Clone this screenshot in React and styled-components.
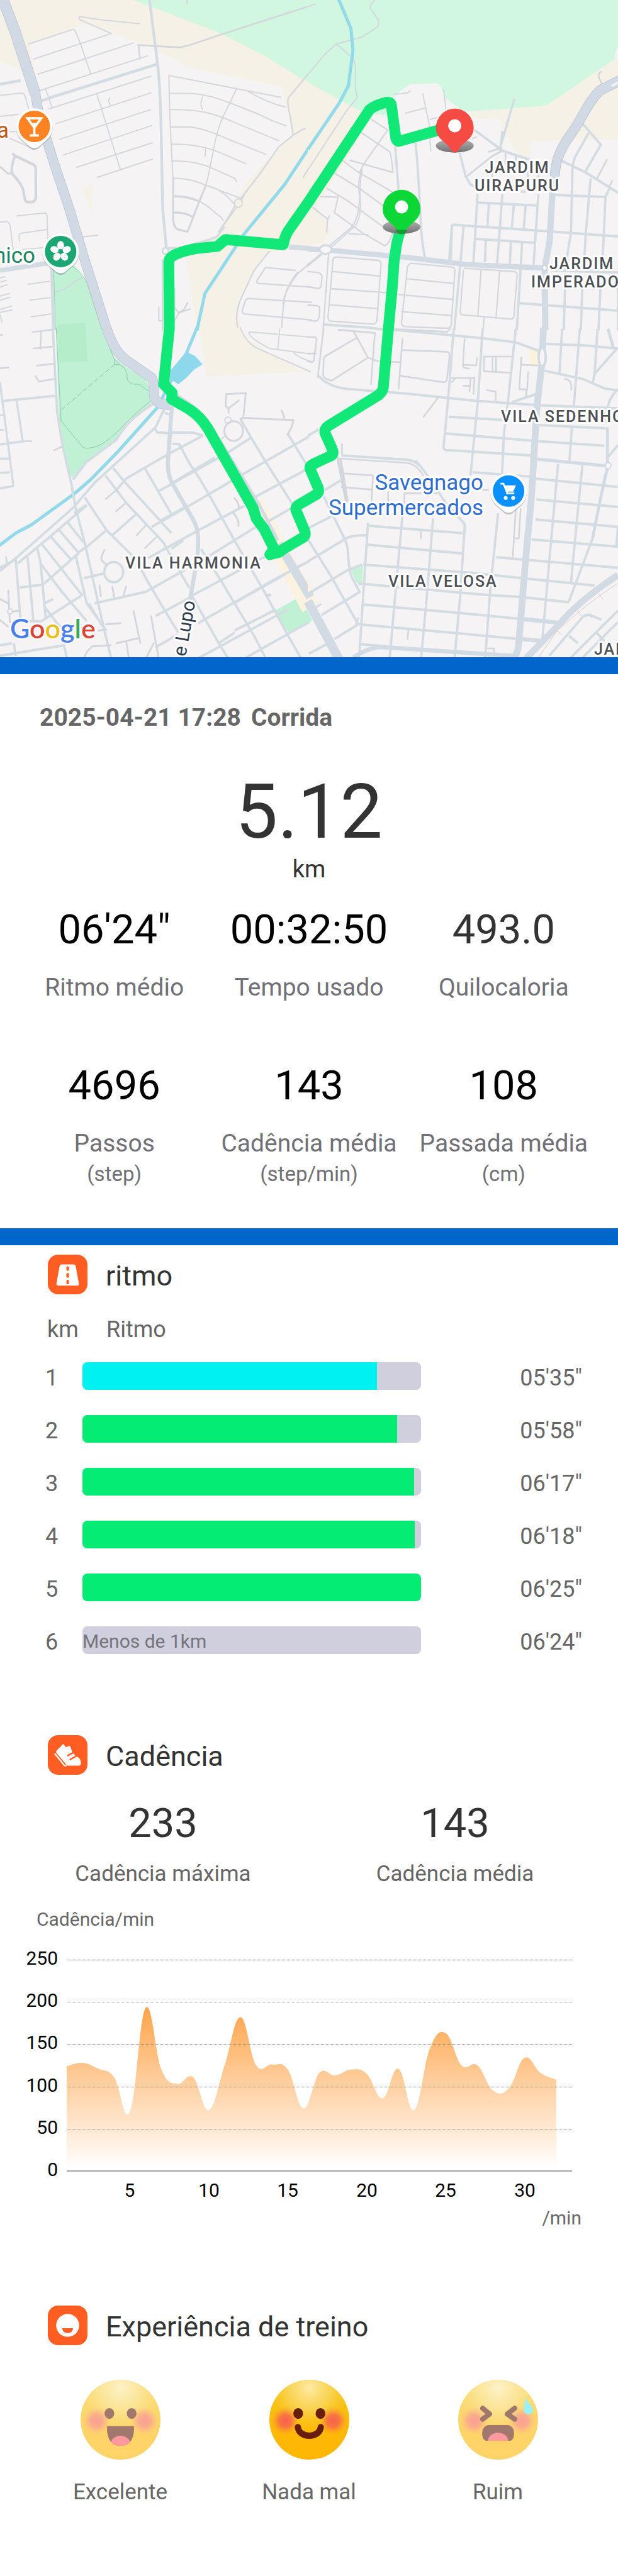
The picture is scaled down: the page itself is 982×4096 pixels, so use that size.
import React, { useState } from "react";
import styled, { createGlobalStyle } from "styled-components";

const GlobalStyle = createGlobalStyle`
  * { box-sizing: border-box; }
  body { margin: 0; background: #fff; font-family: Roboto, "Noto Sans", sans-serif; color: #333; }
`;

const Page = styled.main`
  width: 100%;
`;

const Divider = styled.hr`
  margin: 0;
  border: 0;
  height: 27px;
  background: #0066cc;
`;

const MapFigure = styled.figure`
  margin: 0;
  overflow: hidden;
  svg { display: block; width: 100%; height: auto; }
`;

const Summary = styled.section`
  padding: 45px 27px 66px;
`;

const RunTitle = styled.h1`
  margin: 0 36px;
  font-size: 39px;
  line-height: 48px;
  font-weight: 700;
  color: #666;
  span { margin-left: 16px; }
`;

const Distance = styled.div`
  margin-top: 66px;
  font-size: 120px;
  line-height: 120px;
  text-align: center;
`;

const DistanceUnit = styled.div`
  margin-top: 7px;
  font-size: 38px;
  line-height: 48px;
  text-align: center;
`;

const StatGrid = styled.dl`
  margin: ${(p) => p.$top}px 0 0;
  display: grid;
  grid-template-columns: repeat(${(p) => p.$columns}, 1fr);
  text-align: center;
`;

const Stat = styled.div`
  display: flex;
  flex-direction: column-reverse;
  justify-content: flex-end;
`;

const StatValue = styled.dd`
  margin: 0;
  font-size: 65px;
  line-height: 72px;
  color: ${(p) => (p.$soft ? "#333" : "#000")};
`;

const StatLabel = styled.dt`
  margin-top: ${(p) => (p.$small ? 21 : 32)}px;
  font-size: ${(p) => (p.$small ? 35 : 39)}px;
  line-height: 48px;
  white-space: nowrap;
  color: ${(p) => (p.$small ? "#666" : "#707076")};
`;

const StatUnit = styled.small`
  display: block;
  margin-top: 5px;
  font-size: 33px;
  line-height: 40px;
`;

const Section = styled.section`
  padding: ${(p) => p.$top}px 27px 0;
`;

const SectionHead = styled.header`
  display: flex;
  align-items: center;
  gap: 29px;
  padding-left: 49px;
  svg { width: 63px; height: 63px; flex: none; }
`;

const SectionTitle = styled.h2`
  margin: 0;
  padding-top: 4px;
  font-size: 45px;
  line-height: 56px;
  font-weight: 400;
`;

const PaceTable = styled.table`
  margin-top: 32px;
  width: 100%;
  border-collapse: collapse;
  table-layout: fixed;
  font-size: 36px;
  line-height: 48px;
  color: #666;
`;

const HeadCell = styled.th`
  width: ${(p) => p.$width};
  height: 56px;
  padding: 0 0 0 ${(p) => p.$indent || 0}px;
  font-weight: 400;
  text-align: left;
  vertical-align: top;
`;

const NumberCell = styled.td`
  height: 84px;
  padding: 6px 0 0 45px;
`;

const BarCell = styled.td`
  padding: 0;
`;

const TimeCell = styled.td`
  padding: 6px 30px 0 0;
  text-align: right;
`;

const BarTrack = styled.div`
  height: 44px;
  border-radius: 8px;
  overflow: hidden;
  background: #d0cfdd;
  font-size: 30px;
  color: #75747c;
`;

const BarFill = styled.div`
  height: 100%;
  background: ${(p) => (p.$fastest ? "#00f2f0" : "#04ec74")};
`;

const AxisCaption = styled.p`
  margin: ${(p) => p.$top}px 31px 0;
  font-size: 30px;
  line-height: 40px;
  color: #666;
  text-align: ${(p) => p.$align};
`;

const ChartFrame = styled.div`
  margin: 0 -27px;
  svg { display: block; width: 100%; height: auto; }
`;

const MoodRow = styled.div`
  margin: 55px 14px 0;
  padding-bottom: 108px;
  display: grid;
  grid-template-columns: repeat(3, 1fr);
`;

const MoodButton = styled.button`
  display: flex;
  flex-direction: column;
  align-items: center;
  gap: 28px;
  padding: 0;
  border: 0;
  background: none;
  font: inherit;
  font-size: 35px;
  line-height: 48px;
  color: #666;
  svg { width: 127px; height: 127px; opacity: ${(p) => (p.$active ? 1 : 0.6)}; }
`;

/* ---------- map ---------- */

const minor = { fill: "none", stroke: "#d3d7dd", strokeWidth: 6, strokeLinecap: "round", strokeLinejoin: "round" };
const street = { fill: "none", stroke: "#d3dce2", strokeWidth: 12, strokeLinejoin: "round" };
const avenue = { fill: "none", stroke: "#d2dbe4", strokeWidth: 26, strokeLinejoin: "round" };
const highwayEdge = { fill: "none", stroke: "#b9c4d2", strokeWidth: 50, strokeLinejoin: "round" };
const highway = { fill: "none", stroke: "#d1dae4", strokeWidth: 45, strokeLinejoin: "round" };
const river = { fill: "none", stroke: "#92d9ea", strokeWidth: 16, strokeLinejoin: "round" };

const NorthWest = () => (
  <g transform="scale(.3444 .3667)">
    <path fill="#f5f1e6" d="M0 0H1580V1180L1470 1180 1340 1215 1240 1390 1200 1480 1230 1575H1000L945 1230 870 1190 1110 1120 1250 870 1420 700 1490 650 1430 415 950 320 860 270 700 200 430 115 150 210 190 430 100 330 0 290Z" />
    <path fill="#f5f1e6" d="M418 895 472 872 466 1022Z" />
    <path fill="#d1f7e0" d="M680 0 1120 160 1350 270 1520 370 1580 397V0Z" />
    <path fill="#c1f1d5" d="M270 1280 380 1268 430 1330 518 1575H285Z" />
    <path fill="#b5edca" d="M290 1548 432 1540 436 1575H290Z" />
    <path {...minor} d="M145 210 365 142Q378 138 384 152L408 207 460 352M170 282 565 160 408 95Q392 82 412 80L520 95 708 113M193 354 676 205M202 432 750 266M232 425 265 515M250 519 766 364M285 590 766 443M302 665 764 523M322 739 770 599M389 798 773 681M494 846 774 759M492 450 610 806M560 500C548 480 550 475 558 466" />
    <path {...minor} d="M857 360 1426 464M857 360 862 560 878 850M858 445 980 446C1060 452 1120 475 1170 492L1300 540 1380 575 1452 600M862 523C1000 520 1090 540 1180 580L1414 671M868 606H970C1060 618 1130 655 1200 680L1348 736M870 688C960 685 1030 696 1100 722L1248 781M872 768C960 766 1030 780 1090 808L1190 850 1200 865M878 850C960 852 1000 866 1045 884L1220 945M1045 884C1120 900 1160 940 1190 975M1200 426 1130 560C1085 660 1080 760 1045 884L1010 965M1260 436C1320 470 1380 495 1447 510M1028 462C1015 500 1020 505 1028 520M1044 712 1041 745" />
    <path {...minor} strokeWidth="10" d="M880 850 878 1040Q882 1090 905 1095L952 1105 1010 965 1045 884M885 937Q950 935 1010 960M885 1014Q930 1010 980 1035" />
    <path {...minor} d="M1010 960C1060 980 1080 1010 1125 1038L1132 1052" />
    <circle cx="1210" cy="969" r="20" {...minor} fill="#f5f1e6" />
    <path {...minor} strokeWidth="7" d="M1580 335 1465 465Q1455 485 1470 540L1488 645 1415 700 1330 815 1222 948M1250 910 1228 950M1488 645 1530 620 1548 614M1200 990 1110 1105M1190 985 1150 1050 1110 1105M1540 845 1580 780M950 0V18" />
    <path {...minor} strokeWidth="8" d="M700 215 915 226 960 216 1100 172 1400 80 1580 26M703 215 710 280" />
    <path {...street} strokeWidth="14" d="M758 -5 800 305M800 305C820 480 818 700 826 1000L845 1190M205 484 260 464 798 306M0 402 105 384" />
    <path {...minor} d="M0 455 110 444Q124 446 128 460L145 520M0 555 92 546M40 628H80M50 660 170 710" />
    <path {...minor} strokeWidth="13" d="M66 735 80 745 170 785Q182 790 181 804L182 935Q182 962 160 964L140 964Q126 962 124 940L116 900C100 865 75 845 60 825Q56 790 76 745" />
    <path {...minor} strokeWidth="9" d="M0 795 40 828 60 828" />
    <path {...minor} d="M87 1030 225 1016Q238 1016 239 1030L246 1250M0 1060 35 1057Q48 1060 52 1080L68 1200M240 1094 110 1112Q94 1114 96 1128L100 1153M115 1190 236 1180M420 1130 495 1122M143 1356 250 1342M152 1432 255 1420M158 1511 258 1498M0 1326 25 1320M0 1345 33 1338M0 1370 38 1358M0 1412 48 1400M0 1432 52 1418M0 1476 60 1460M0 1490 62 1478M0 1500 10 1535M280 1393C350 1385 370 1335 420 1325" />
    <path {...street} strokeWidth="22" d="M0 1290 265 1252" />
    <path {...street} strokeWidth="16" d="M262 1260 272 1575" />
    <path fill="none" stroke="#8fd4b1" strokeWidth="3" d="M272 1270 282 1575M365 1270Q420 1300 440 1350L518 1575" />
    <path {...highwayEdge} strokeWidth="56" d="M0 -40 80 160 180 450" />
    <path {...highwayEdge} d="M180 450 200 560 245 690" />
    <path {...highwayEdge} d="M245 690C280 800 300 850 350 990L430 1240 545 1580" />
    <path {...highway} strokeWidth="51" d="M0 -40 80 160 180 450" />
    <path {...highway} d="M180 450 200 560 245 690C280 800 300 850 350 990L430 1240 545 1580" />
    <path {...street} strokeWidth="10" d="M832 1200 850 1185 920 1180C980 1165 1050 1150 1100 1130L1140 1080" />
    <circle cx="840" cy="1197" r="15" fill="#f7f5f6" stroke="#d3dce2" strokeWidth="9" />
    <path {...minor} strokeWidth="7" d="M824 1240 825 1575M806 1465V1530H822M886 1375V1470L908 1492 935 1475 952 1444M908 1492 965 1474M886 1530 908 1492M1365 1200 1290 1290 1230 1410Q1185 1500 1210 1575" />
    <path {...minor} strokeWidth="7" d="M1348 1276 1500 1290M1348 1276 1303 1340Q1300 1350 1315 1352L1580 1370M1510 1300C1450 1370 1440 1400 1430 1560M1580 1250 1515 1302C1460 1360 1440 1420 1436 1450M1260 1424 1580 1442M1260 1424Q1250 1424 1245 1435L1230 1480Q1226 1496 1245 1498L1580 1526" />
    <path {...river} d="M1580 688 1445 880 1240 1115 1040 1400 1000 1575" />
    <path {...street} strokeWidth="24" d="M1465 1178 1580 1186" />
  </g>
);

const NorthEast = () => (
  <g transform="translate(540 0) scale(.3444 .3667)">
    <path fill="#f5f1e6" d="M-5 380 270 520 320 560 40 985 110 1110 70 1160 -5 1170Z" />
    <path fill="#d1f7e0" d="M-5 0H1570V230L1550 290 1210 500 1170 508 830 530 690 540 430 560 250 525 -5 394Z" />
    <path fill="#f5f1e6" d="M820 531 1170 510 1210 500 1540 290 1570 275V665L1130 672 1118 750 1070 740 1000 650 970 568 820 565Z" />
    <path fill="#f5f3f4" d="M430 460 510 403 650 397 670 415 690 465 760 515 840 560 840 720 430 720 380 560Z" />
    <path fill="#f5f3f4" d="M1560 235 1570 230V295L1552 270Z" />
    <path {...minor} d="M-5 355 80 260 138 210 270 177 345 130Q362 112 350 92L315 45Q305 25 335 0M0 30 32 20M138 210C200 260 225 270 236 310L236 420 246 465 190 530 -5 810M435 450 500 443 514 434M490 540 595 514M578 448 610 590 618 720M684 428 695 520M615 570 650 560M830 660 850 654" />
    <path {...river} d="M150 -5 213 135 224 240 200 410 155 490 -5 712" />
    <path {...minor} strokeWidth="7" d="M318 570 400 620M262 630 410 724Q418 735 426 822M170 765 240 815 440 925M130 826 250 895 375 980M90 898 200 960 380 1085M60 938 148 940 130 1015 270 1110 385 1172Q405 1165 425 1112M20 990 95 1045 104 1030M95 1045 90 1108M400 620 280 780 258 820M210 765 425 822M206 1115 300 1120 M95 1180 215 1085Q245 1050 252 1000L258 940C250 890 250 850 270 810" />
    <path {...minor} strokeWidth="6" d="M118 1176 232 1080Q260 1050 262 980 254 880 270 820" />
    <path {...street} d="M438 700 455 905M540 675C560 820 560 1000 575 1150L588 1230M765 728 795 840 820 880 850 895M840 620 985 720 1130 765M972 720 982 625M1043 470 985 660 972 700" />
    <path {...minor} strokeWidth="9" d="M982 718 930 745 805 838M912 724 970 708M998 735V780M1050 745V780M930 840V780M1112 845V780M1165 850V770" />
    <path {...street} d="M720 1240V1240L726 1072M726 1072 1235 1105 1570 1128M856 925 835 1255M856 966 1155 980M982 925 955 1260M1165 925 1140 1265M913 975 906 1080M1040 980 1030 1090M1100 982 1090 1095M785 1078 770 1245M848 1140 1145 1158M898 1145 893 1250M1025 1155 1020 1260M1082 1158 1076 1262M1250 930 1510 940M1338 790 1330 1110 1300 1285M1430 850 1405 1115 1395 1290M1525 900 1505 940 1490 1260M726 1072 712 1240M1075 914H1100" />
    <path {...street} d="M1278 765 1400 820 1570 920M1338 790 1350 750 1420 635M1378 578 1482 690 1405 815" />
    <path {...minor} strokeWidth="8" d="M1512 763 1462 852M1540 862 1522 895M1490 402C1468 375 1465 350 1482 342" />
    <path fill="none" stroke="#b4c0cf" strokeWidth="50" d="M1575 385 1480 430C1420 480 1390 560 1330 640 1260 730 1250 790 1248 840" />
    <path {...highway} strokeWidth="45" d="M1575 385 1480 430C1420 480 1390 560 1330 640 1260 730 1250 790 1248 840" />
    <path {...avenue} strokeWidth="32" d="M1248 835 1235 930 1222 1150 1196 1280 1200 1575" />
    <path fill="#f5f3f4" d="M1530 408 1568 388V400L1545 414Z" />
    <path {...avenue} strokeWidth="25" d="M-5 1188 85 1192 500 1228 800 1262 1190 1278" />
    <path {...minor} strokeWidth="12" d="M-5 1265 60 1215" />
    <ellipse cx="85" cy="1190" rx="30" ry="21" fill="#f7f5f6" stroke="#d1dae3" strokeWidth="9" />
    <circle cx="1197" cy="1278" r="12" fill="#f7f5f6" stroke="#c4ced9" strokeWidth="5" />
    <path {...minor} strokeWidth="7" d="M100 1210 72 1575M-5 1295 45 1300Q68 1305 66 1325L63 1360Q58 1378 45 1376L-5 1368M-5 1455 40 1458Q56 1462 55 1475L52 1515Q45 1532 30 1532L-5 1528M140 1226 350 1242Q366 1244 366 1260L345 1530Q340 1546 325 1546L110 1532Q96 1528 97 1512L122 1240Q126 1226 140 1226M118 1295 360 1317M112 1377 395 1396M104 1454 345 1472M520 1256 725 1274Q742 1278 741 1292L722 1550Q718 1566 700 1566L485 1558Q468 1550 470 1538L500 1275Q506 1257 520 1256M500 1330 733 1352M455 1405 728 1428M472 1487 720 1505M790 1280 1040 1295Q1058 1298 1057 1312L1040 1510Q1038 1522 1025 1522L780 1502Q766 1500 768 1485L784 1290M874 1286 858 1505M968 1292 950 1515M890 1510 884 1575" />
    <path {...street} d="M75 1548 300 1562 400 1575M768 1262 738 1575M1075 1280 1055 1575M1070 1446 1330 1465 1570 1482M1300 1370 1294 1575M1388 1370 1380 1575M1480 1370 1470 1575M1568 1370V1575M1230 1290 1570 1300" />
  </g>
);

const SouthWest = () => (
  <g transform="translate(0 575) scale(.3444 .3667)">
    <path fill="#c1f1d5" d="M285 -5H515L580 140 650 190 740 240 770 310 765 360 650 440 590 530 440 630 370 708 350 700 300 440Z" />
    <path fill="#b5edca" d="M290 -5H436L445 155 300 160Z" />
    <path fill="#f5f1e6" d="M1010 -5H1215L1270 60 1400 130 1540 205 1050 230Z" />
    <path fill="#c1f1d5" d="M1395 1345 1520 1280 1575 1370 1575 1395 1465 1450Z" />
    <path fill="none" stroke="#fbf2e0" strokeWidth="90" d="M1290 830 1575 1330" />
    <path fill="none" stroke="#84c9a6" strokeWidth="3" d="M285 -5 310 440 420 565Q440 578 500 558C600 510 620 450 765 345V305L705 265Q640 270 645 220 635 165 580 170V145L515 -5M580 145 610 170" />
    <path fill="none" stroke="#84b99c" strokeWidth="3" strokeDasharray="24 12" d="M310 388 580 172" />
    <path {...river} d="M1000 -5 945 120 870 245 800 375 600 585 460 720 380 785 160 935 80 975 -5 1035" />
    <path fill="#8ed8ec" d="M945 110 990 130 1028 170 985 195 945 235 905 265 880 250 860 245 865 200Z" />
    <path {...street} d="M268 -5 290 400 318 560 362 740 385 860 430 1020 530 1440 565 1575M775 360C640 440 620 490 590 530L440 635 370 720" />
    <path {...minor} strokeWidth="8" d="M0 30H12M165 16 260 5M208 10 205 95M170 94 262 86M188 176 270 168M0 188 44 185M180 226 197 252 275 240M274 580 315 562M0 412H15M0 482H15M122 537H160M537 812 588 772M588 872 640 830M694 985 740 938M736 1046 796 992M30 1088 35 1115" />
    <path {...street} strokeWidth="11" d="M0 255 12 345 40 545 68 750 0 762M12 345 280 320M85 345 115 535M0 552 122 537M0 620H45M0 688 50 685" />
    <path {...street} d="M0 1155 80 1095 370 855 480 735 790 470 845 360M0 1140 80 1100M90 1120 250 995 440 842M785 475 800 495 860 498M860 495 980 496 1030 510M875 550 910 550 960 640 1010 710 1060 790 1190 1010 1330 1235 1460 1460 1530 1575M835 400 860 410M870 590 1030 510M640 715 870 590M575 665 630 728 870 975M535 700 640 830 830 1020 870 1090M595 765 640 715M735 665 870 885M805 775 1140 600 1275 520M770 945 950 850 1160 735M815 915 940 850M870 738 1090 615M430 805 540 960 690 1100 740 1190 840 1350 905 1450M440 840 375 880M570 985 690 885M435 1045 535 965M395 1070 430 1045 M750 1095 1010 960 1240 845M870 1050 930 1010M1060 1085 1300 945M970 1275 1340 1090 1568 1000M1005 1405 1395 1195 1568 1110M1060 790 1240 690 1568 515M1300 800 1568 665M1360 920 1480 855M1275 520 1345 630 1500 860M1220 430 1275 520M1460 500 1560 655M1020 1050 1120 1200 1290 1465 1350 1575M870 1090 960 1235M975 1275 1110 1500 1160 1575M1490 1145 1568 1110M1190 1308 1450 1170M1190 1440 1400 1340M1110 1500 1190 1450 M1000 1575 1460 1340M1250 1568 1568 1400M790 1370 970 1280M790 1520 900 1460M480 1310 740 1255 940 1150" />
    <path {...street} d="M340 920 425 1020M295 955 400 1070M255 990 360 1100M215 1030 420 1275M190 1050 205 1110 232 1380M140 1090 170 1400M80 1100 105 1400M205 1120 310 1250 440 1395M385 1085 440 1310 540 1440M400 1070 225 1215M100 1235 225 1220M225 1310 270 1290M210 1395 410 1275M225 1325 310 1430M450 1310 520 1420M425 1190 525 1168M140 1395H215" />
    <circle cx="577" cy="1161" r="48" {...street} />
    <path {...minor} strokeWidth="9" d="M540 1125C500 1100 515 1090 530 1055M505 1225 512 1275M570 1232 580 1280M640 1230 628 1270M42 1250 50 1400M0 1290 42 1310M0 1390 40 1420M60 1350 95 1345M678 1348 712 1498M592 1500 708 1475M767 1372 805 1568M540 1410 610 1405M640 1490 655 1575M740 1575 780 1500M430 1568Q430 1545 470 1515L560 1510M1190 808Q1215 830 1212 860M1185 880Q1215 910 1210 940M1355 1272Q1375 1260 1370 1275M500 1440 530 1436" />
    <circle cx="51" cy="1349" r="12" {...minor} fill="#f5f3f4" />
    <path {...minor} strokeWidth="9" d="M1148 312 1248 307 1235 420M1148 312 1145 370 1160 380 1212 342M1160 380V400M1235 425 1380 432 1490 435 1480 470 1460 505M1430 390 1445 430M1220 430 1235 425" />
    <circle cx="1157" cy="437" r="16" {...minor} />
    <circle cx="1186" cy="488" r="47" {...minor} strokeWidth="9" />
    <path {...minor} d="M1125 525 1145 510M1220 -5Q1250 70 1310 95L1575 205M1265 15 1575 40M1265 15Q1255 40 1370 95L1575 120M1420 0 1410 98M1490 115Q1530 145 1575 155" />
    <path {...highwayEdge} d="M540 -5Q580 110 640 150L770 235Q785 260 780 300 780 360 840 360L870 365" />
    <path {...highway} d="M540 -5Q580 110 640 150L770 235Q785 260 780 300 780 360 840 360L870 365" />
    <path {...avenue} d="M872 370 855 600Q845 680 870 730L980 910C1010 960 1010 1010 1000 1100L960 1320" strokeWidth="21" />
    <path {...avenue} strokeWidth="16" d="M890 315C980 360 1060 440 1100 510L1310 830 1410 1010" />
    <path {...avenue} strokeWidth="44" d="M1415 1025 1575 1280" />
    <path {...street} d="M0 1510 60 1500M0 1560 325 1510 340 1575M70 1500 80 1560" />
  </g>
);

const SouthEast = () => (
  <g transform="translate(540 575) scale(.3444 .3667)">
    <path fill="#c5f2d7" d="M210 1145 230 1132 275 1130 270 1218 240 1210Z" />
    <path fill="#c1f1d5" d="M-5 1360 18 1388 -5 1410Z" />
    <path fill="#fbf2dc" d="M1120 95H1165V175H1120Z" />
    <path fill="#fbf2e0" d="M-5 1190 18 1240 -5 1270Z" />
    <path {...minor} strokeWidth="8" d="M-5 40H30Q42 45 38 60L25 150Q20 162 5 158L-5 155M-5 118H35M75 -5 45 230M150 5 335 20 315 265M225 10 300 138 115 248M240 45 85 130Q75 135 75 150L72 225Q80 240 115 248M300 138 350 155 465 160M475 48 455 285M472 102 700 110Q716 112 714 130L700 245Q695 258 680 255L465 225M400 0 700 15 718 0M790 50 782 172 850 175 852 140M782 175Q780 190 815 190M720 235H840L835 312M820 240 815 300M785 272H820M725 255 745 235M885 133H1030M888 135V203L1020 210M932 138V205M950 138V208M903 293 948 300V350M1078 138 1068 288 1108 290 1112 208M1080 172 1160 175M1103 290V320M1298 240Q1335 240 1332 290M655 330 582 420M168 550V600M165 690 325 700 318 825M165 755 320 768M402 780V830M485 785V830M485 785H650M568 960V1000M505 1440 500 1480M1075 860 1065 1000H1050M1050 860 1035 1085M885 770H910M908 1525H940V1560M250 1380 240 1410M35 1330 60 1315" />
    <path {...street} d="M45 220Q100 285 230 290L500 310 860 345 1160 365 1568 380M430 5 880 45 1050 65 1165 105 1180 140M1195 200 1390 240 1500 285 1568 295M735 0 708 320 683 570Q690 582 720 580L1130 605M882 0 858 340 820 700M1050 0 1010 350 990 500 980 700M1030 350 1160 310M710 420 980 435M695 500 1140 535 1500 558M1205 72 1400 80 1568 95M1285 0 1272 215M1375 0 1345 365M1465 0 1450 215 1568 90M1450 215 1440 260M830 685 1120 705M1568 290C1520 330 1510 380 1510 450M1170 460 1505 475M1335 470 1322 635M1568 555 1520 610M1150 715 1568 755M1155 815 1568 850M1150 910 1568 945M1130 1005 1568 1040M950 1090 1568 1140M1265 645 1220 1110 1185 1480M1388 650 1340 1110 1330 1220M1505 690 1440 1000 1320 1300M1568 950 1560 1040M960 880 920 1250 895 1568M300 925 255 1568M305 940 780 975M295 1030 775 1072M475 890 440 1250 410 1568M630 905 600 1260 570 1568M790 950 770 1250 740 1568M540 630Q570 650 700 840L790 930V975M275 1125 830 1165 1080 1190 1450 1225M250 1215 900 1270 1080 1280 1320 1305M270 1315 750 1355 1080 1385M255 1410 1070 1480M260 1505 400 1515M165 605 500 625Q540 630 560 655M-5 510 50 480M80 770 160 725M0 950 115 895M-5 1110 180 1005Q210 985 290 985M-5 1265 190 1155 270 1125M75 800 180 1000C210 1050 190 1110 215 1180L260 1260M-5 1005 115 1185 250 1410M65 1365 260 1255M130 1480 250 1410M0 1550 100 1500" />
    <path {...minor} strokeWidth="12" d="M145 615 190 830M160 620 195 820" />
    <path {...minor} strokeWidth="7" d="M165 620 500 640Q550 650 580 700" />
    <path {...avenue} strokeWidth="15" d="M1155 622 1520 655M1518 0 1545 90M1515 470V640M1518 655Q1480 800 1440 1000" />
    <path {...avenue} strokeWidth="34" d="M1190 -5 1185 140 1155 400 1130 800 1100 1100 1065 1500Q1060 1560 1030 1575" />
    <ellipse cx="1184" cy="135" rx="18" ry="45" fill="#f7f5f6" stroke="#d2dbe4" strokeWidth="13" />
    <circle cx="1519" cy="653" r="15" fill="#f7f5f6" stroke="#c6d0da" strokeWidth="4" />
    <path {...avenue} strokeWidth="20" d="M1085 1385 1265 1402M1075 1480 1190 1490 1290 1400M225 1568Q320 1510 390 1520L1030 1560" />
    <path {...avenue} strokeWidth="32" d="M1568 1175C1480 1230 1350 1320 1270 1410L1100 1575" />
    <path fill="none" stroke="#d5c8c4" strokeWidth="3" d="M1568 1215C1430 1300 1370 1350 1260 1440L1160 1575M1470 1265 1492 1290M1362 1345 1382 1370M1260 1440 1280 1460" />
    <path {...street} d="M1568 1345 1330 1568M1440 1375Q1420 1355 1390 1375L1220 1560M1425 1365 1485 1388M1568 1400 1390 1568M1460 1450 1500 1490M1320 1465 1365 1500" />
    <path {...avenue} strokeWidth="46" d="M-5 1300 155 1580" />
  </g>
);

const PoiPin = ({ x, y, color, children }) => (
  <g transform={`translate(${x} ${y})`}>
    <path d="M0 39C-7 39-10 33-18 27A32 32 0 1 1 18 27C10 33 7 39 0 39Z" fill="#5b6470" opacity=".35" transform="translate(0 2)" />
    <path d="M0 38C-7 38-10 33-18 27A32 32 0 1 1 18 27C10 33 7 38 0 38Z" fill="#fff" />
    <circle r="27.5" fill={color} />
    {children}
  </g>
);

const RoutePin = ({ x, y, color, dark }) => (
  <g transform={`translate(${x} ${y})`}>
    <ellipse cy="-12" rx="33" ry="12" fill="url(#pinShadow)" />
    <path d="M0 0Q-4 0-8-7C-14-18-33-24-33-43A33 34 0 0 1 33-43C33-24 14-18 8-7Q4 0 0 0Z" fill={color} />
    {dark && <path d="M-10-7H10Q5 1 0 1T-10-7Z" fill="#067a1c" opacity=".55" />}
    <circle cy="-47" r="11.5" fill="#fff" />
  </g>
);

const MapLabel = styled.text`
  font-size: ${(p) => p.$size || 25}px;
  font-weight: ${(p) => p.$weight || 500};
  letter-spacing: ${(p) => (p.$spaced ? "2px" : "normal")};
  fill: ${(p) => p.$color || "#4c4f54"};
  stroke: #fff;
  stroke-width: 6px;
  stroke-linejoin: round;
  paint-order: stroke;
`;

const GoogleMark = styled.text`
  font-family: Lato, Roboto, sans-serif;
  font-size: 43px;
  font-weight: 600;
  stroke: #fff;
  stroke-width: 4px;
  paint-order: stroke;
`;

const RouteMap = () => (
  <MapFigure>
    <svg viewBox="0 0 982 1045" role="img" aria-label="Mapa do percurso">
      <defs>
        <linearGradient id="pinShadow" x1="0" y1="0" x2="0" y2="1">
          <stop offset="0" stopColor="#9c9c9c" stopOpacity=".75" />
          <stop offset="1" stopColor="#6f6f6f" />
        </linearGradient>
      </defs>
      <rect width="982" height="1045" fill="#f5f3f4" />
      <g transform="scale(.909)">
        <NorthWest />
        <NorthEast />
        <SouthWest />
        <SouthEast />
        <path
          fill="none"
          stroke="#12e877"
          strokeWidth="19"
          strokeLinejoin="round"
          strokeLinecap="round"
          d="M790 221 762 229 698 247Q694 248 692 242L684 183Q682 178 676 179 655 184 646 192L540 352 508 398Q499 410 497 420L495 428 394 419 380 431 341 435Q315 440 303 447 295 452 295 458L296 575 291 623 286 672 301 687 300 698 331 716Q350 728 363 749L442 888 448 907 462 926 479 960 472 970"
        />
        <path
          fill="none"
          stroke="#12e877"
          strokeWidth="19"
          strokeLinejoin="round"
          strokeLinecap="round"
          d="M472 970 488 966 496 960 530 940Q536 936 532 927L518 894Q515 888 522 883L553 865Q559 861 556 853L542 820Q541 815 547 812L579 797Q584 794 581 786L568 757Q567 750 574 745L662 691Q669 685 670 678L679 575 686 499 689 455 692 436Q694 418 703 395"
        />
        <RoutePin x={795} y={267} color="#f64b43" />
        <RoutePin x={702} y={409} color="#0bd836" dark />
        <PoiPin x={60} y={221} color="#ff8322">
          <path fill="none" stroke="#fff" strokeWidth="4" d="M-12-14H12L1 1H-1ZM0 0V15M-8 16H8" />
          <path fill="#fff" d="M-7-6H7L0 3Z" />
        </PoiPin>
        <PoiPin x={106} y={440} color="#1ba673">
          {[0, 72, 144, 216, 288].map((a) => (
            <ellipse key={a} cy="-11" rx="6" ry="7.5" fill="#fff" transform={`rotate(${a})`} />
          ))}
          <circle r="4" fill="#1ba673" />
        </PoiPin>
        <PoiPin x={889} y={859} color="#0b90ff">
          <path fill="none" stroke="#fff" strokeWidth="3" d="M-14-13H-9L-2 4H10" />
          <path fill="#fff" d="M-8-10H13L8 1H-3ZM-5 5-2 1-1 5Z" />
          <circle cx="-5" cy="12" r="3.4" fill="#fff" />
          <circle cx="8" cy="12" r="3.4" fill="#fff" />
        </PoiPin>
      </g>
      <MapLabel $size={35} $weight={400} $color="#c5560f" x="14" y="219" textAnchor="end">a</MapLabel>
      <MapLabel $size={35} $weight={400} $color="#1b8462" x="56" y="418" textAnchor="end">nico</MapLabel>
      <MapLabel $spaced textAnchor="middle" x="822" y="275">JARDIM</MapLabel>
      <MapLabel $spaced textAnchor="middle" x="822" y="304">UIRAPURU</MapLabel>
      <MapLabel $spaced x="873" y="428">JARDIM</MapLabel>
      <MapLabel $spaced x="844" y="457">IMPERADOR</MapLabel>
      <MapLabel $spaced x="796" y="671">VILA SEDENHO</MapLabel>
      <MapLabel $spaced x="199" y="904">VILA HARMONIA</MapLabel>
      <MapLabel $spaced x="617" y="933">VILA VELOSA</MapLabel>
      <MapLabel $spaced x="944" y="1041">JARDIM</MapLabel>
      <MapLabel $size={35} $weight={400} $color="#2f6ed0" textAnchor="end" x="768" y="779">Savegnago</MapLabel>
      <MapLabel $size={35} $weight={400} $color="#2f6ed0" textAnchor="end" x="768" y="819">Supermercados</MapLabel>
      <MapLabel $size={30} $weight={400} $color="#2e3c4e" transform="translate(292 1061) rotate(-80)">ne Lupo</MapLabel>
      <GoogleMark x="16" y="1015">
        <tspan fill="#4a80e8">G</tspan>
        <tspan fill="#dc4437">o</tspan>
        <tspan fill="#edbd1c">o</tspan>
        <tspan fill="#4a80e8">g</tspan>
        <tspan fill="#3aa757">l</tspan>
        <tspan fill="#dc4437">e</tspan>
      </GoogleMark>
    </svg>
  </MapFigure>
);

/* ---------- section icons ---------- */

const IconTile = ({ children }) => (
  <svg viewBox="0 0 69 69" aria-hidden="true">
    <rect width="69" height="69" rx="18" fill="#ff5d22" />
    {children}
  </svg>
);

const RoadIcon = () => (
  <IconTile>
    <path fill="#fff" d="M24 17H45Q48 17 48.500 20L54 50Q54.500 54 51 54H18Q14.500 54 15 50L20.500 20Q21 17 24 17Z" />
    <path stroke="#ff5d22" strokeWidth="4.500" strokeLinecap="round" d="M34.500 22.500V26M34.500 34V38M34.500 46V49.500" />
  </IconTile>
);

const ShoeIcon = () => (
  <IconTile>
    <path fill="#fff" d="M26 16Q27 15 28 17L32 21 36 19Q39 18 39.500 21L43 30 49 37Q54 38 56 42 58 46 57.500 50 57 53 54 53H36Q33 53 31 50L15 31Q14 29 15 27Z" />
    <path fill="none" stroke="#fff" strokeWidth="2.600" d="M12 32 29 53H33" />
    <path fill="none" stroke="#ff5d22" strokeWidth="2.800" d="M34 36 45 30M38 43 50 36" />
  </IconTile>
);

const SmileIcon = () => (
  <IconTile>
    <circle cx="34.500" cy="34.500" r="20" fill="#fff" />
    <path fill="#ff5d22" d="M25 39.500H44Q43 48 34.500 48T25 39.500Z" />
  </IconTile>
);

/* ---------- cadence chart ---------- */

const cadence = [
  124, 128, 121, 111, 70, 193, 120, 103, 111, 72, 125, 182, 125, 126, 120, 74,
  116, 113, 120, 115, 86, 121, 72, 145, 163, 125, 125, 95, 98, 134, 116, 108,
];
const PLOT_LEFT = 106;
const PLOT_RIGHT = 909;
const PLOT_BOTTOM = 380;
const STEP = (PLOT_RIGHT - PLOT_LEFT) / 32;
const toX = (i) => PLOT_LEFT + i * STEP;
const toY = (v) => PLOT_BOTTOM - (v * 336) / 250;

const areaPath = (() => {
  const pts = cadence.map((v, i) => [toX(i), toY(v)]);
  const at = (i) => pts[Math.max(0, Math.min(pts.length - 1, i))];
  let d = `M${pts[0].join(" ")}`;
  for (let i = 1; i < pts.length; i++) {
    const [a, b, c, n] = [at(i - 2), at(i - 1), at(i), at(i + 1)];
    d += `C${b[0] + (c[0] - a[0]) * 0.2} ${b[1] + (c[1] - a[1]) * 0.2} ${c[0] - (n[0] - b[0]) * 0.2} ${c[1] - (n[1] - b[1]) * 0.2} ${c[0]} ${c[1]}`;
  }
  return `${d}V${PLOT_BOTTOM}H${PLOT_LEFT}Z`;
})();

const AxisText = styled.text`
  font-size: 30px;
  fill: #000;
`;

const CadenceChart = () => (
  <ChartFrame>
    <svg viewBox="0 0 982 435" role="img" aria-label="Cadência por minuto">
      <defs>
        <linearGradient id="cadenceFill" gradientUnits="userSpaceOnUse" x1="0" y1="100" x2="0" y2="376">
          <stop offset="0" stopColor="#fe9d3c" />
          <stop offset="1" stopColor="#fff" />
        </linearGradient>
      </defs>
      <path d={areaPath} fill="url(#cadenceFill)" />
      {[50, 100, 150, 200, 250].map((v) => (
        <line key={v} x1={PLOT_LEFT} x2={PLOT_RIGHT} y1={Math.round(toY(v)) + 0.5} y2={Math.round(toY(v)) + 0.5} stroke="#777" strokeOpacity=".9" strokeDasharray="1 1" />
      ))}
      <line x1={PLOT_LEFT} x2={PLOT_RIGHT} y1={PLOT_BOTTOM} y2={PLOT_BOTTOM} stroke="#a6a6a6" strokeWidth="2" />
      {[0, 50, 100, 150, 200, 250].map((v) => (
        <AxisText key={v} x="92" y={Math.round(toY(v)) + 8} textAnchor="end">{v}</AxisText>
      ))}
      {[5, 10, 15, 20, 25, 30].map((m) => (
        <AxisText key={m} x={Math.round(toX(m - 1))} y="421" textAnchor="middle">{m}</AxisText>
      ))}
    </svg>
  </ChartFrame>
);

/* ---------- mood faces ---------- */

const Face = ({ id, children }) => (
  <svg viewBox="0 0 140 140" aria-hidden="true">
    <defs>
      <radialGradient id={`${id}-shine`} cx=".5" cy=".1" r=".55">
        <stop offset="0" stopColor="#fdeaa6" />
        <stop offset=".5" stopColor="#fad75e" stopOpacity=".8" />
        <stop offset="1" stopColor="#f8c71e" stopOpacity="0" />
      </radialGradient>
      <linearGradient id={`${id}-base`} x1="0" y1="0" x2="0" y2="1">
        <stop offset="0" stopColor="#f2c61c" />
        <stop offset=".6" stopColor="#fdb906" />
        <stop offset="1" stopColor="#ffb703" />
      </linearGradient>
      <radialGradient id={`${id}-blush`}>
        <stop offset="0" stopColor="#f7604f" />
        <stop offset=".45" stopColor="#f7604f" stopOpacity=".75" />
        <stop offset="1" stopColor="#fb8f3a" stopOpacity="0" />
      </radialGradient>
      <clipPath id={`${id}-clip`}><circle cx="70" cy="70" r="70" /></clipPath>
    </defs>
    <circle cx="70" cy="70" r="70" fill={`url(#${id}-base)`} />
    <circle cx="70" cy="70" r="70" fill={`url(#${id}-shine)`} />
    <g clipPath={`url(#${id}-clip)`}>
      <circle cx="28" cy="72" r="25" fill={`url(#${id}-blush)`} />
      <circle cx="112" cy="72" r="25" fill={`url(#${id}-blush)`} />
    </g>
    {children}
  </svg>
);

const Eyes = () => (
  <g fill="#671f0c">
    <ellipse cx="50.500" cy="59" rx="8.500" ry="9.500" />
    <ellipse cx="89.500" cy="59" rx="8.500" ry="9.500" />
  </g>
);

const GreatFace = () => (
  <Face id="great">
    <Eyes />
    <clipPath id="great-mouth"><path d="M48 81H92Q94 81 94 84 93 116 70 116T46 84Q46 81 48 81Z" /></clipPath>
    <g clipPath="url(#great-mouth)">
      <rect x="40" y="76" width="60" height="44" fill="#671f0c" />
      <ellipse cx="70" cy="114" rx="18" ry="16" fill="#ff5661" />
    </g>
  </Face>
);

const OkayFace = () => (
  <Face id="okay">
    <Eyes />
    <path d="M50 83C52 103 88 103 90 83" fill="none" stroke="#671f0c" strokeWidth="11" strokeLinecap="round" />
  </Face>
);

const BadFace = () => (
  <Face id="bad">
    <path d="M43 50 55 60 43 69M99 50 86 60 99 69" fill="none" stroke="#671f0c" strokeWidth="9" strokeLinecap="round" strokeLinejoin="round" />
    <clipPath id="bad-mouth"><path d="M56 79H84C94 79 98 86 98 94 98 103 94 107 90 107H50C46 107 42 103 42 94 42 86 46 79 56 79Z" /></clipPath>
    <g clipPath="url(#bad-mouth)">
      <rect x="40" y="76" width="60" height="34" fill="#671f0c" />
      <ellipse cx="70" cy="108" rx="18" ry="15" fill="#ff5661" />
    </g>
    <path d="M118 31C121 40 131 46 131 53A8 8 0 0 1 115 52C115 44 118 40 118 31Z" fill="#54e8f5" />
  </Face>
);

/* ---------- data ---------- */

const stats = [
  [
    { value: "06'24\"", label: "Ritmo médio" },
    { value: "00:32:50", label: "Tempo usado" },
    { value: "493.0", label: "Quilocaloria", soft: true },
  ],
  [
    { value: "4696", label: "Passos", unit: "(step)" },
    { value: "143", label: "Cadência média", unit: "(step/min)" },
    { value: "108", label: "Passada média", unit: "(cm)" },
  ],
];

const splits = [
  { km: 1, seconds: 335 },
  { km: 2, seconds: 358 },
  { km: 3, seconds: 377 },
  { km: 4, seconds: 378 },
  { km: 5, seconds: 385 },
  { km: 6, seconds: 384, partial: true },
];
const slowest = Math.max(...splits.map((s) => s.seconds));
const fastest = Math.min(...splits.map((s) => s.seconds));
const pace = (s) => `0${Math.floor(s / 60)}'${String(s % 60).padStart(2, "0")}"`;

const moods = [
  { name: "Excelente", Icon: GreatFace },
  { name: "Nada mal", Icon: OkayFace },
  { name: "Ruim", Icon: BadFace },
];

export default function App() {
  const [mood, setMood] = useState("Nada mal");
  return (
    <Page>
      <GlobalStyle />
      <RouteMap />
      <Divider />
      <Summary>
        <RunTitle>2025-04-21 17:28<span>Corrida</span></RunTitle>
        <Distance>5.12</Distance>
        <DistanceUnit>km</DistanceUnit>
        {stats.map((group, i) => (
          <StatGrid key={i} $columns={3} $top={i ? 96 : 36}>
            {group.map((s) => (
              <Stat key={s.label}>
                <StatLabel>
                  {s.label}
                  {s.unit && <StatUnit>{s.unit}</StatUnit>}
                </StatLabel>
                <StatValue $soft={s.soft}>{s.value}</StatValue>
              </Stat>
            ))}
          </StatGrid>
        ))}
      </Summary>
      <Divider />
      <Section $top={15}>
        <SectionHead>
          <RoadIcon />
          <SectionTitle>ritmo</SectionTitle>
        </SectionHead>
        <PaceTable>
          <thead>
            <tr>
              <HeadCell $width="104px" $indent={48}>km</HeadCell>
              <HeadCell $width="58%" $indent={38}>Ritmo</HeadCell>
              <HeadCell />
            </tr>
          </thead>
          <tbody>
            {splits.map((s) => (
              <tr key={s.km}>
                <NumberCell>{s.km}</NumberCell>
                <BarCell>
                  <BarTrack>
                    {s.partial ? "Menos de 1km" : (
                      <BarFill $fastest={s.seconds === fastest} style={{ width: `${(s.seconds / slowest) * 100}%` }} />
                    )}
                  </BarTrack>
                </BarCell>
                <TimeCell>{pace(s.seconds)}</TimeCell>
              </tr>
            ))}
          </tbody>
        </PaceTable>
      </Section>
      <Section $top={109}>
        <SectionHead>
          <ShoeIcon />
          <SectionTitle>Cadência</SectionTitle>
        </SectionHead>
        <StatGrid $columns={2} $top={41}>
          <Stat>
            <StatLabel $small>Cadência máxima</StatLabel>
            <StatValue $soft>233</StatValue>
          </Stat>
          <Stat>
            <StatLabel $small>Cadência média</StatLabel>
            <StatValue $soft>143</StatValue>
          </Stat>
        </StatGrid>
        <AxisCaption $top={28} $align="left">Cadência/min</AxisCaption>
        <CadenceChart />
        <AxisCaption $top={0} $align="right">/min</AxisCaption>
      </Section>
      <Section $top={119}>
        <SectionHead>
          <SmileIcon />
          <SectionTitle>Experiência de treino</SectionTitle>
        </SectionHead>
        <MoodRow>
          {moods.map(({ name, Icon }) => (
            <MoodButton key={name} type="button" $active={mood === name} aria-pressed={mood === name} onClick={() => setMood(name)}>
              <Icon />
              {name}
            </MoodButton>
          ))}
        </MoodRow>
      </Section>
    </Page>
  );
}
